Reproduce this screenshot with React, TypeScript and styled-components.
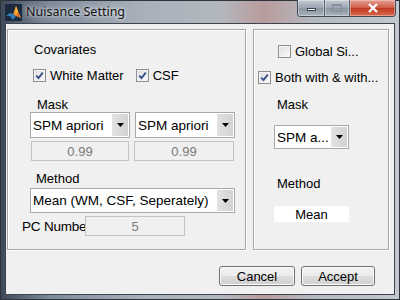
import styled, { createGlobalStyle } from 'styled-components'

const Global = createGlobalStyle`
    html, body {
        margin: 0;
        padding: 0;
        width: 400px;
        height: 300px;
        overflow: hidden;
        background: #5d6773;
    }
    * { box-sizing: border-box; }
`

const CheckBox = ({ checked }: { checked?: boolean }) => (
    <Box>
        {checked && (
            <svg width="9" height="9" viewBox="0 0 9 9">
                <path d="M1.2 4.6 L3.5 7 L7.8 1.6" fill="none" stroke="#3b4f8c" strokeWidth="1.9" />
            </svg>
        )}
    </Box>
)

const Popup = ({ text, w, h }: { text: string; w: number; h: number }) => (
    <PopupBox $w={w} $h={h}>
        <span>{text}</span>
        <Arrow>
            <svg width="7" height="4" viewBox="0 0 7 4">
                <path d="M0 0 H7 L3.5 4 Z" fill="#000" />
            </svg>
        </Arrow>
    </PopupBox>
)

const MatlabLogo = () => (
    <svg width="17" height="17" viewBox="0 0 17 17">
        <rect width="17" height="17" fill="#1b2a3e" />
        <path d="M1 12 L5 9 L8 10 L11 2 L13 7 L16 14 L11 12 L8 16 L5 12 Z" fill="#2f7fb8" />
        <path d="M8 10 L11 2 L13 7 L16 14 L11 12 Z" fill="#e86c1f" />
        <path d="M11 2 L13 7 L11 12 L9.5 9 Z" fill="#f6b13a" />
    </svg>
)

export default function App() {
    return (
        <>
            <Global />
            <Window>
                <TitleBar>
                    <IconWrap><MatlabLogo /></IconWrap>
                    <Title>Nuisance Setting</Title>
                    <Caption>
                        <CapBtn $w={27}><MinGlyph /></CapBtn>
                        <CapBtn $w={25}><MaxGlyph /></CapBtn>
                        <CloseBtn>
                            <svg width="12" height="10" viewBox="0 0 12 10">
                                <path d="M2 1 L10 9 M10 1 L2 9" stroke="#fff" strokeWidth="2.4" />
                            </svg>
                        </CloseBtn>
                    </Caption>
                </TitleBar>
                <Client>
                    <Panels>
                        <LeftPanel>
                            <Label $x={26} $top={12}>Covariates</Label>
                            <CheckRow $top={11}>
                                <Check $x={25}><CheckBox checked />White Matter</Check>
                                <Check $x={12}><CheckBox checked />CSF</Check>
                            </CheckRow>
                            <Label $x={29} $top={14}>Mask</Label>
                            <FieldRow $x={22} $top={0}>
                                <Popup text="SPM apriori" w={100} h={26} />
                                <Popup text="SPM apriori" w={100} h={26} />
                            </FieldRow>
                            <FieldRow $x={23} $top={3}>
                                <Edit $w={98}>0.99</Edit>
                                <Edit $w={100}>0.99</Edit>
                            </FieldRow>
                            <Label $x={28} $top={10}>Method</Label>
                            <FieldRow $x={22} $top={2}>
                                <Popup text="Mean (WM, CSF, Seperately)" w={205} h={25} />
                            </FieldRow>
                            <PcRow>
                                <PcLabel>PC Numbe</PcLabel>
                                <Edit $w={100}>5</Edit>
                            </PcRow>
                        </LeftPanel>
                        <RightPanel>
                            <CheckRow $top={14}>
                                <Check $x={24}><CheckBox />Global Si...</Check>
                            </CheckRow>
                            <CheckRow $top={11}>
                                <Check $x={4}><CheckBox checked />Both with &amp; with...</Check>
                            </CheckRow>
                            <Label $x={23} $top={12}>Mask</Label>
                            <FieldRow $x={20} $top={13}>
                                <Popup text="SPM a..." w={75} h={24} />
                            </FieldRow>
                            <Label $x={23} $top={27}>Method</Label>
                            <FieldRow $x={20} $top={15}>
                                <ValueBox>Mean</ValueBox>
                            </FieldRow>
                        </RightPanel>
                    </Panels>
                    <Buttons>
                        <Button $w={76}>Cancel</Button>
                        <Button $w={74}>Accept</Button>
                    </Buttons>
                </Client>
            </Window>
        </>
    )
}

const Window = styled.div`
    width: 400px;
    height: 300px;
    display: flex;
    flex-direction: column;
    padding: 0 4px 4px 4px;
    border: 1px solid #2e343c;
    background:
        linear-gradient(90deg, #3e4a5a 0%, #7d8a99 12%, #a7b0ba 35%, #b3b8bf 55%, #b99b9b 66%, #b4b9c0 78%, #c3c8ce 100%);
    font-family: "Liberation Sans", Arial, sans-serif;
    font-size: 13px;
    color: #000;
`

const TitleBar = styled.div`
    height: 22px;
    display: flex;
    align-items: flex-start;
`

const IconWrap = styled.div`
    margin: 3px 0 0 0;
    display: flex;
`

const Title = styled.div`
    margin: 2px 0 0 4px;
    font-family: "Noto Sans", "DejaVu Sans", sans-serif;
    font-size: 12.5px;
    color: #111;
    text-shadow: 0 0 6px rgba(255, 255, 255, 0.9), 0 0 3px rgba(255, 255, 255, 0.7);
    flex: 1;
`

const Caption = styled.div`
    display: flex;
    flex-shrink: 0;
    margin: -1px -1px 0 0;
    border: 1px solid #404a58;
    border-top: none;
    border-radius: 0 0 4px 4px;
    overflow: hidden;
`

const CapBtn = styled.div<{ $w: number }>`
    width: ${p => p.$w}px;
    height: 16px;
    display: flex;
    align-items: center;
    justify-content: center;
    background: linear-gradient(#c5cbd2, #9aa4b0 50%, #8a95a2 51%, #a9b3bd);
    border-right: 1px solid #59636f;
    box-shadow: inset 0 0 0 1px rgba(255, 255, 255, 0.35);
`

const MinGlyph = styled.div`
    width: 9px;
    height: 3px;
    margin-top: 3px;
    background: #fff;
    border: 1px solid #3a4350;
`

const MaxGlyph = styled.div`
    width: 10px;
    height: 8px;
    border: 1px solid #7e8894;
    border-top-width: 2px;
    opacity: 0.8;
`

const CloseBtn = styled.div`
    width: 45px;
    height: 16px;
    display: flex;
    align-items: center;
    justify-content: center;
    background: linear-gradient(#e3a093, #cf5a44 50%, #c0391f 51%, #d66a4e);
    box-shadow: inset 0 0 0 1px rgba(255, 220, 210, 0.45);
`

const Client = styled.div`
    flex: 1;
    background: #f0f0f0;
    border: 1px solid #3d444e;
    display: flex;
    flex-direction: column;
    padding: 5px 0 0 1px;
`

const Panels = styled.div`
    display: flex;
    gap: 7px;
`

const Frame = styled.div`
    height: 221px;
    border: 1px solid #a6a6a6;
    box-shadow: inset 1px 1px 0 #fff, 1px 1px 0 #fff;
    display: flex;
    flex-direction: column;
`

const LeftPanel = styled(Frame)`
    width: 239px;
`

const RightPanel = styled(Frame)`
    width: 136px;
`

const Label = styled.div<{ $x: number; $top: number }>`
    margin: ${p => p.$top}px 0 0 ${p => p.$x}px;
    line-height: 15px;
    height: 15px;
`

const CheckRow = styled.div<{ $top: number }>`
    display: flex;
    margin-top: ${p => p.$top}px;
    height: 15px;
    align-items: center;
`

const Check = styled.div<{ $x: number }>`
    display: flex;
    align-items: center;
    gap: 4px;
    margin-left: ${p => p.$x}px;
    white-space: nowrap;
`

const Box = styled.div`
    width: 13px;
    height: 13px;
    border: 1px solid #8f8f8f;
    background: linear-gradient(135deg, #dcdcdc, #fbfbfb);
    box-shadow: inset 0 0 0 1px #f4f4f4;
    display: flex;
    align-items: center;
    justify-content: center;
`

const FieldRow = styled.div<{ $x: number; $top: number }>`
    display: flex;
    align-items: center;
    gap: 5px;
    margin: ${p => p.$top}px 0 0 ${p => p.$x}px;
`

const PcRow = styled.div`
    display: flex;
    align-items: center;
    margin: 3px 0 0 14px;
`

const PopupBox = styled.div<{ $w: number; $h: number }>`
    width: ${p => p.$w}px;
    height: ${p => p.$h}px;
    background: #fff;
    border: 1px solid #a9a9a9;
    display: flex;
    align-items: stretch;

    span {
        flex: 1;
        padding-left: 2px;
        display: flex;
        align-items: center;
        white-space: nowrap;
        overflow: hidden;
        font-size: 13.5px;
    }
`

const Arrow = styled.div`
    width: 16px;
    margin: 1px;
    background: linear-gradient(90deg, #e2e2e2, #d2d2d2);
    display: flex;
    align-items: center;
    justify-content: center;
`

const Edit = styled.div<{ $w: number }>`
    width: ${p => p.$w}px;
    height: 20px;
    border: 1px solid #c3c3c3;
    background: #f0f0f0;
    color: #7a7a7a;
    display: flex;
    align-items: center;
    justify-content: center;
`

const PcLabel = styled.div`
    width: 63px;
    font-size: 13.5px;
    letter-spacing: -0.2px;
    white-space: nowrap;
`

const ValueBox = styled.div`
    width: 75px;
    height: 16px;
    background: #fff;
    display: flex;
    align-items: center;
    justify-content: center;
`

const Buttons = styled.div`
    display: flex;
    justify-content: flex-end;
    gap: 6px;
    margin-top: 16px;
    padding-right: 19px;
`

const Button = styled.div<{ $w: number }>`
    width: ${p => p.$w}px;
    height: 20px;
    border: 1px solid #707070;
    border-radius: 3px;
    background: linear-gradient(#f2f2f2, #ebebeb 50%, #dddddd 51%, #cfcfcf);
    box-shadow: inset 0 0 0 1px #fcfcfc;
    display: flex;
    align-items: center;
    justify-content: center;
`
